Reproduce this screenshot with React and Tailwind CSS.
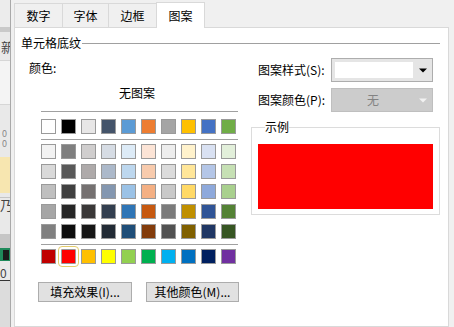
import React from "react";

const themeRow = ["#FFFFFF","#000000","#E7E6E6","#44546A","#5B9BD5","#ED7D31","#A5A5A5","#FFC000","#4472C4","#70AD47"];
const tintRows = [
  ["#F2F2F2","#7F7F7F","#D0CECE","#D6DCE4","#DDEBF7","#FCE4D6","#EDEDED","#FFF2CC","#D9E1F2","#E2EFDA"],
  ["#D9D9D9","#595959","#AEAAAA","#ACB9CA","#BDD7EE","#F8CBAD","#DBDBDB","#FFE699","#B4C6E7","#C6E0B4"],
  ["#BFBFBF","#404040","#757171","#8497B0","#9BC2E6","#F4B084","#C9C9C9","#FFD966","#8EA9DB","#A9D08E"],
  ["#A6A6A6","#262626","#3A3838","#333F4F","#2F75B5","#C65911","#7B7B7B","#BF8F00","#305496","#548235"],
  ["#808080","#0D0D0D","#161616","#222B35","#1F4E78","#833C0C","#525252","#806000","#203764","#375623"],
];
const stdRow = ["#C00000","#FF0000","#FFC000","#FFFF00","#92D050","#00B050","#00B0F0","#0070C0","#002060","#7030A0"];

function Swatch({ c, selected }) {
  return (
    <div
      className={
        "w-[15px] h-[15px] border border-[#9a9a9a] " +
        (selected ? "rounded-[1px] outline outline-1 outline-offset-[2px] outline-[#e4cd6c]" : "")
      }
      style={{ backgroundColor: c }}
    />
  );
}

function Row({ colors, sel }) {
  return (
    <div className="flex gap-[5px]">
      {colors.map((c, i) => (
        <Swatch key={i} c={c} selected={sel === i} />
      ))}
    </div>
  );
}

function Arrow({ color }) {
  return (
    <svg width="8" height="5" viewBox="0 0 8 5">
      <path d="M0 0.5h8L4 4.5z" fill={color} />
    </svg>
  );
}

export default function App() {
  const font = { fontFamily: '"Noto Sans CJK SC", "Microsoft YaHei", sans-serif' };
  return (
    <div
      className="w-[454px] h-[327px] overflow-hidden bg-[#f0f0f0] flex text-[12px] leading-[16px] text-black"
      style={font}
    >
      {/* background spreadsheet strip */}
      <div className="w-[10px] h-full flex flex-col overflow-hidden bg-[#e9e9e9] text-[11px] leading-[14px] text-[#444]">
        <div className="h-[27px] bg-[#ececec]" />
        <div className="h-[5px] bg-[#c9c9c9]" />
        <div className="h-[8px]" />
        <div className="h-[16px] flex justify-end whitespace-nowrap text-[13px]">
          <span className="-mr-[4px]">新</span>
        </div>
        <div className="h-[4px]" />
        <div className="h-[45px] bg-[#f4f4f4] border-y border-[#d6d6d6]" />
        <div className="h-[24px]" />
        <div className="h-[10px] text-[9px] leading-[10px] text-[#888] pl-[2px]">0</div>
        <div className="h-[10px] text-[9px] leading-[10px] text-[#888] pl-[2px]">0</div>
        <div className="h-[8px]" />
        <div className="h-[36px] bg-[#f7e6b0]" />
        <div className="h-[5px] border-b border-[#c5c5c5]" />
        <div className="h-[24px] flex justify-end whitespace-nowrap text-[13px]">
          <span className="-mr-[3px]">乃</span>
        </div>
        <div className="h-[12px]" />
        <div className="h-[14px] bg-[#c6c6c6]" />
        <div className="h-[13px] bg-[#1f8a5b] flex items-center justify-end pr-[1px]">
          <div className="w-[6px] h-[10px] bg-[#1b1b1b]" />
        </div>
        <div className="h-[4px]" />
        <div className="h-[16px] border-b border-[#333] text-[12px] leading-[15px]">0</div>
        <div className="flex-1 bg-[#dcdcdc]" />
      </div>
      <div className="w-px h-full bg-[#a9a9a9]" />
      <div className="w-[3px]" />

      {/* dialog */}
      <div className="w-[435px] h-full flex flex-col">
        {/* tabs */}
        <div className="h-[28px] flex items-end">
          <div className="w-[49px] h-[25px] border border-[#d9d9d9] bg-[#f0f0f0] flex items-center justify-center">数字</div>
          <div className="-ml-px w-[47px] h-[25px] border border-[#d9d9d9] bg-[#f0f0f0] flex items-center justify-center">字体</div>
          <div className="-ml-px w-[49px] h-[25px] border border-[#d9d9d9] bg-[#f0f0f0] flex items-center justify-center">边框</div>
          <div className="-ml-px w-[49px] h-[26px] border-x border-t border-[#d9d9d9] bg-white flex items-center justify-center pt-[1px]">图案</div>
          <div className="flex-1 h-[25px] border-b border-[#d9d9d9]" />
        </div>

        {/* panel */}
        <div className="flex-1 bg-white border-x border-b border-[#d9d9d9] flex flex-col">
          <div className="mt-[7px] h-[16px] flex items-center">
            <span className="ml-[6px]">单元格底纹</span>
            <div className="flex-1 h-px bg-[#a0a0a0] ml-[1px] mr-[8px]" />
          </div>

          <div className="flex">
            {/* left column */}
            <div className="w-[230px] flex flex-col">
              <div className="mt-[9px] ml-[14px]">颜色:</div>
              <div className="ml-[26px] w-[197px] flex flex-col">
                <div className="mt-[9px] text-center pr-[5px]">无图案</div>
                <div className="mt-[10px] h-px bg-[#a0a0a0]" />
                <div className="mt-[7px]">
                  <Row colors={themeRow} />
                </div>
                <div className="mt-[5px] h-px bg-[#a0a0a0]" />
                <div className="mt-[4px] flex flex-col gap-[5px]">
                  {tintRows.map((r, i) => (
                    <Row key={i} colors={r} />
                  ))}
                </div>
                <div className="mt-[5px] h-px bg-[#a0a0a0]" />
                <div className="mt-[4px]">
                  <Row colors={stdRow} sel={1} />
                </div>
              </div>
              <div className="mt-[18px] ml-[23px] flex gap-[14px]">
                <div className="w-[94px] h-[20px] bg-[#e1e1e1] border border-[#adadad] flex items-center justify-center">填充效果(I)...</div>
                <div className="w-[93px] h-[20px] bg-[#e1e1e1] border border-[#adadad] flex items-center justify-center">其他颜色(M)...</div>
              </div>
            </div>

            {/* right column */}
            <div className="flex-1 flex flex-col">
              <div className="mt-[7px] flex items-center">
                <div className="ml-[13px] w-[73px]">图案样式(S):</div>
                <div className="w-[102px] h-[24px] bg-[#e5e5e5] border border-[#adadad] flex items-center">
                  <div className="ml-[3px] w-[78px] h-[16px] bg-white" />
                  <div className="flex-1 flex justify-center">
                    <Arrow color="#000" />
                  </div>
                </div>
              </div>
              <div className="mt-[6px] flex items-center">
                <div className="ml-[13px] w-[73px]">图案颜色(P):</div>
                <div className="w-[102px] h-[24px] bg-[#cccccc] border border-[#bfbfbf] flex items-center">
                  <div className="w-[82px] text-center text-[#838383]">无</div>
                  <div className="flex-1 flex justify-center">
                    <Arrow color="#f2f2f2" />
                  </div>
                </div>
              </div>
              <fieldset className="mt-[7px] ml-[6px] w-[189px] h-[96px] border border-[#dcdcdc] px-[6px] pb-[5px]">
                <legend className="ml-[7px] px-0 leading-[16px]">示例</legend>
                <div className="mt-[9px] h-[65px] bg-[#ff0000]" />
              </fieldset>
            </div>
          </div>
        </div>
      </div>
    </div>
  );
}
